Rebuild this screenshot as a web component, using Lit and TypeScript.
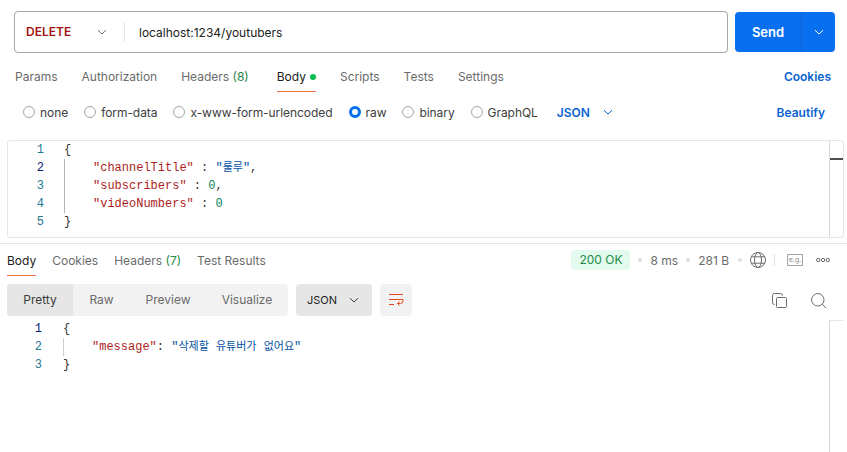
import { LitElement, html, css } from "lit";
import { customElement } from "lit/decorators.js";

const chev = (c: string, w = 10) => html`<svg class="chev" width="${w}" height="${w}" viewBox="0 0 10 10" fill="none" stroke="${c}" stroke-width="1"><path d="M1 3.2 5 7 9 3.2"/></svg>`;

@customElement("app-root")
export class AppRoot extends LitElement {
  static styles = css`
    :host { display: block; width: 847px; height: 452px; overflow: hidden; background: #fff; font-family: Inter, "Noto Sans", sans-serif; font-size: 12px; color: #6b6b6b; position: relative; }
    * { box-sizing: border-box; }
    .top { display: flex; gap: 7px; padding: 11px 12px 0 14px; height: 53px; }
    .url { flex: 1; height: 42px; border: 1px solid #a6a6a6; border-radius: 4px; display: flex; align-items: center; padding-left: 11px; }
    .method { width: 60px; font-weight: 600; color: #a31210; font-size: 12px; line-height: 14px; margin-top: -1px; }
    .url .chev { margin-left: 11px; }
    .vsep { width: 1px; height: 20px; background: #e6e6e6; margin: 0 14px 0 17px; }
    .addr { color: #212121; font-size: 12px; }
    .send { width: 100px; height: 40px; margin-top: 1px; background: #0870f0; border-radius: 4px; color: #fff; display: flex; align-items: center; font-size: 13px; font-weight: 600; }
    .send span { width: 67px; text-align: center; height: 100%; line-height: 40px; border-right: 1px solid #0a63d1; }
    .send div { flex: 1; display: flex; justify-content: center; }
    .tabs { display: flex; gap: 24px; padding: 0 16px 0 15px; align-items: center; }
    .tabs.req { margin-top: 6px; height: 34px; }
    .tab { position: relative; white-space: nowrap; }
    .tab.on { color: #212121; }
    .tab.on::after { content: ""; position: absolute; left: 0; right: 0; bottom: -8px; height: 1px; background: #f26b3a; }
    .count { color: #1f8a45; }
    .dot { display: inline-block; width: 6px; height: 6px; border-radius: 50%; background: #0cbb52; margin: 0 0 1px 4px; }
    .hdrs { margin-right: 4px; }
    .push { margin-left: auto; }
    .link { color: #0a63d1; font-weight: 600; font-size: 12px; }
    .radios { display: flex; align-items: center; height: 36px; padding: 0 22px 0 23px; margin-top: 1px; color: #3d3d3d; }
    .r { display: flex; align-items: center; gap: 5px; margin-right: 16px; white-space: nowrap; letter-spacing: -0.06px; }
    .c { width: 12px; height: 12px; border-radius: 50%; border: 1px solid #a6a6a6; background: #fff; }
    .c.on { border: 3px solid #0870f0; }
    .radios .chev { margin-left: 13px; }
    .jsonlink { margin-left: 3px; }
    .editor { margin: 10px 3px 0 7px; height: 98px; border: 1px solid #e6e6e6; border-radius: 3px; display: flex; }
    .code { font-family: "Liberation Mono", "Noto Sans CJK KR", monospace; font-size: 12px; line-height: 18px; display: grid; grid-template-columns: 36px 1fr; column-gap: 20px; align-content: start; }
    .editor .code { flex: 1; }
    .num { text-align: right; color: #237893; }
    .num.a { color: #0b216f; }
    .ln { color: #333; white-space: pre; position: relative; }
    .ln.ind { padding-left: 29px; }
    .ln.ind::before { content: ""; position: absolute; left: 0; top: 0; bottom: 0; width: 1px; background: #b3b3b3; }
    .k { color: #ab1e1e; }
    .s { color: #0451a5; }
    .h { font-size: 11px; }
    .n { color: #098658; }
    .sb { width: 14px; border-left: 1px solid #d9d9d9; padding-top: 17px; }
    .sb i { display: block; height: 2px; background: #4d4d4d; }
    .divider { height: 1px; background: #e6e6e6; margin-top: 5px; }
    .rtabs { display: flex; align-items: center; height: 32px; padding: 0 17px 0 7px; gap: 16px; }
    .meta { margin-left: auto; display: flex; align-items: center; }
    .pill { width: 59px; height: 20px; border-radius: 4px; background: #e3fbee; color: #1f8a45; text-align: center; line-height: 20px; }
    .d { width: 4px; height: 4px; border-radius: 50%; background: #e0e0e0; margin: 0 8px; }
    .d.last { margin-left: 9px; }
    .msep { width: 1px; height: 12px; background: #e0e0e0; margin: 0 12px 0 8px; }
    .eg { width: 16px; height: 12px; margin-right: 13px; border: 1px solid #a6a6a6; font-size: 7px; line-height: 9px; text-align: center; color: #8c8c8c; overflow: hidden; }
    .tools { display: flex; align-items: center; padding: 8px 21px 0 7px; height: 40px; }
    .seg { display: flex; width: 281px; height: 32px; background: #f2f2f2; border-radius: 4px; overflow: hidden; align-items: center; }
    .seg span { text-align: center; line-height: 32px; }
    .seg .on { width: 66px; background: #e6e6e6; color: #3d3d3d; }
    .raw { width: 57px; }
    .prev { width: 76px; }
    .vis { width: 82px; }
    .sel { width: 76px; height: 32px; background: #e6e6e6; border-radius: 4px; margin-left: 8px; color: #212121; display: flex; align-items: center; padding-left: 11px; gap: 12px; font-size: 11px; }
    .wrap { width: 32px; height: 32px; margin-left: 8px; background: #f2f2f2; border-radius: 4px; display: flex; align-items: center; justify-content: center; }
    .ticons { margin-left: auto; display: flex; gap: 24px; align-items: center; }
    .resp { display: flex; height: 136px; margin-right: 4px; }
    .resp .code { flex: 1; padding-top: 4px; margin-left: 6px; column-gap: 21px; }
    .resp .ln.ind::before { background: #d0d0d0; }
    .resp .sb { margin-top: 4px; border-top: 1px solid #e6e6e6; padding: 0; }
  `;

  render() {
    return html`
      <div class="top">
        <div class="url">
          <span class="method">DELETE</span>${chev("#6b6b6b")}
          <div class="vsep"></div><span class="addr">localhost:1234/youtubers</span>
        </div>
        <div class="send"><span>Send</span><div>${chev("#fff")}</div></div>
      </div>
      <div class="tabs req">
        <span class="tab">Params</span><span class="tab">Authorization</span>
        <span class="tab hdrs">Headers <span class="count">(8)</span></span>
        <span class="tab on">Body<i class="dot"></i></span>
        <span class="tab">Scripts</span><span class="tab">Tests</span><span class="tab">Settings</span>
        <span class="push link">Cookies</span>
      </div>
      <div class="radios">
        <label class="r"><i class="c"></i>none</label>
        <label class="r"><i class="c"></i>form-data</label>
        <label class="r"><i class="c"></i>x-www-form-urlencoded</label>
        <label class="r"><i class="c on"></i>raw</label>
        <label class="r"><i class="c"></i>binary</label>
        <label class="r"><i class="c"></i>GraphQL</label>
        <span class="link jsonlink">JSON</span>${chev("#0a63d1")}
        <span class="push link">Beautify</span>
      </div>
      <div class="editor">
        <div class="code">
          <span class="num">1</span><span class="ln">{</span>
          <span class="num a">2</span><span class="ln ind"><span class="k">"channelTitle"</span> : <span class="s">"<span class="h">룰루</span>"</span>,</span>
          <span class="num">3</span><span class="ln ind"><span class="k">"subscribers"</span> : <span class="n">0</span>,</span>
          <span class="num">4</span><span class="ln ind"><span class="k">"videoNumbers"</span> : <span class="n">0</span></span>
          <span class="num">5</span><span class="ln">}</span>
        </div>
        <div class="sb"><i></i></div>
      </div>
      <div class="divider"></div>
      <div class="rtabs">
        <span class="tab on">Body</span><span class="tab">Cookies</span>
        <span class="tab">Headers <span class="count">(7)</span></span><span class="tab">Test Results</span>
        <div class="meta">
          <span class="pill">200 OK</span><i class="d"></i><span>8 ms</span><i class="d"></i><span>281 B</span><i class="d last"></i>
          <svg width="16" height="16" viewBox="0 0 16 16" fill="none" stroke="#6b6b6b" stroke-width="1"><circle cx="8" cy="8" r="7.5"/><ellipse cx="8" cy="8" rx="3.5" ry="7.5"/><path d="M1.5 4.8h13M1.5 11.2h13"/></svg>
          <i class="msep"></i>
          <span class="eg">e.g.</span>
          <svg width="14" height="6" viewBox="0 0 14 6" fill="none" stroke="#6b6b6b"><circle cx="2.2" cy="3" r="1.7"/><circle cx="7" cy="3" r="1.7"/><circle cx="11.8" cy="3" r="1.7"/></svg>
        </div>
      </div>
      <div class="tools">
        <div class="seg">
          <span class="on">Pretty</span>
          <span class="raw">Raw</span><span class="prev">Preview</span><span class="vis">Visualize</span>
        </div>
        <div class="sel">JSON ${chev("#3d3d3d")}</div>
        <div class="wrap"><svg width="16" height="14" viewBox="0 0 16 14" fill="none" stroke="#e8491c"><path d="M1 1.5h14M1 6.5h14M1 11.5h5"/><path d="M15 6.5v1.5a2.5 2.5 0 0 1-2.5 2.5H9.5M11.5 8.5l-2 2 2 2"/></svg></div>
        <div class="ticons">
          <svg width="15" height="15" viewBox="0 0 15 15" fill="none" stroke="#6b6b6b"><rect x="4.5" y="4.5" width="10" height="10" rx="1"/><path d="M2.5 11.5a2 2 0 0 1-2-2V2.5a2 2 0 0 1 2-2h6a2 2 0 0 1 2 2"/></svg>
          <svg width="15" height="15" viewBox="0 0 15 15" fill="none" stroke="#6b6b6b"><circle cx="6.8" cy="6.8" r="6.2"/><path d="M11.2 11.2 15 15"/></svg>
        </div>
      </div>
      <div class="resp">
        <div class="code">
          <span class="num a">1</span><span class="ln">{</span>
          <span class="num">2</span><span class="ln ind"><span class="k">"message"</span>: <span class="s">"<span class="h">삭제할</span> <span class="h">유튜버가</span> <span class="h">없어요</span>"</span></span>
          <span class="num">3</span><span class="ln">}</span>
        </div>
        <div class="sb"></div>
      </div>
    `;
  }
}
